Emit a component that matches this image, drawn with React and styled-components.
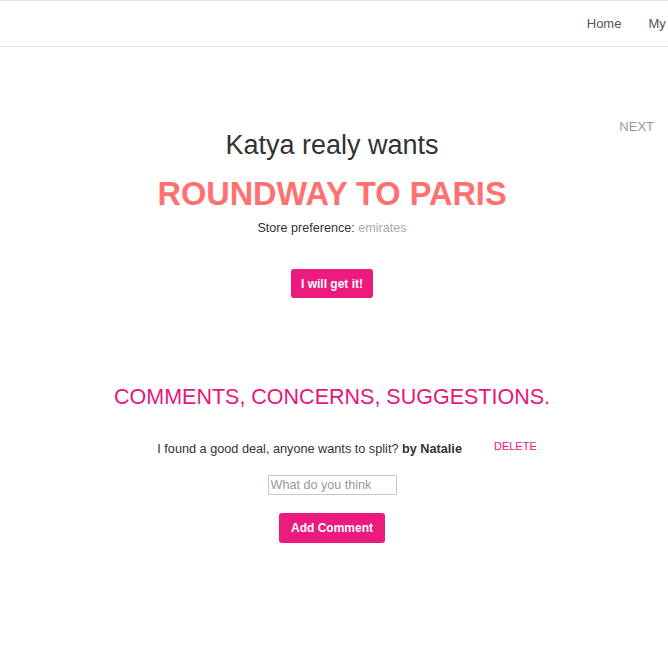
import styled, { createGlobalStyle } from "styled-components";

const GlobalStyle = createGlobalStyle`
  html, body {
    margin: 0;
    padding: 0;
    overflow: hidden;
    background: #fff;
    font-family: "Liberation Sans", Arial, Helvetica, sans-serif;
    color: #333;
  }
`;

const Page = styled.div`
  width: 668px;
`;

// HEADER
const Header = styled.header`
  height: 45px;
  border-top: 1px solid #e2e2e2;
  border-bottom: 1px solid #e2e2e2;
  display: flex;
  align-items: center;
  justify-content: flex-end;
  overflow: hidden;
`;

const Nav = styled.nav`
  display: flex;
  gap: 27px;
  margin-right: -44px;
  white-space: nowrap;
`;

const NavLink = styled.a`
  font-size: 13px;
  color: #555;
  text-decoration: none;
`;

const Main = styled.main`
  padding-right: 4px;
`;

// HERO
const Hero = styled.section`
  display: grid;
  grid-template-columns: 1fr auto 1fr;
  padding-top: 72px;
`;

const HeroText = styled.div`
  grid-column: 2;
  text-align: center;
  padding-top: 10px;
`;

const Next = styled.a`
  grid-column: 3;
  justify-self: end;
  align-self: start;
  margin-right: 10px;
  font-size: 13px;
  color: #999;
  text-decoration: none;
`;

const Wants = styled.h2`
  margin: 0;
  font-size: 27px;
  font-weight: normal;
  color: #333;
  line-height: 32px;
`;

const Item = styled.h1`
  margin: 15px 0 0;
  font-size: 32.5px;
  font-weight: bold;
  color: #ff7070;
  line-height: 36px;
`;

const Store = styled.p`
  margin: 9px 0 0;
  font-size: 12.6px;
  color: #333;
`;

const Muted = styled.span`
  color: #aaa;
`;

const Button = styled.button`
  background: #eb1a7c;
  color: #fff;
  border: none;
  border-radius: 3px;
  font-family: inherit;
  font-weight: bold;
  font-size: 12px;
  padding: 0 ${(p) => p.$pad || "10px"};
  height: ${(p) => p.$height || "29px"};
  cursor: pointer;
`;

const Center = styled.div`
  display: flex;
  justify-content: center;
  margin-top: ${(p) => p.$top || "0"};
`;

// COMMENTS
const Comments = styled.section`
  margin-top: 86px;
  text-align: center;
`;

const CommentsTitle = styled.h3`
  margin: 0;
  font-size: 21.5px;
  font-weight: normal;
  color: #e8157a;
  line-height: 26px;
`;

const CommentRow = styled.div`
  margin-top: 32px;
  display: flex;
  justify-content: center;
  align-items: baseline;
  gap: 32px;
  padding-left: 30px;
`;

const CommentText = styled.p`
  margin: 0;
  font-size: 12.7px;
  color: #333;
`;

const Delete = styled.a`
  font-size: 11px;
  color: #e8157a;
  text-decoration: none;
  position: relative;
  top: -3px;
`;

const Input = styled.input`
  width: 123px;
  height: 14px;
  padding: 2px 2px;
  border: 1px solid #c8c8c8;
  font-family: inherit;
  font-size: 12.6px;
  color: #333;
  outline: none;

  &::placeholder {
    color: #999;
  }
`;

export default function App() {
  return (
    <Page>
      <GlobalStyle />
      <Header>
        <Nav>
          <NavLink href="#">Home</NavLink>
          <NavLink href="#">My Wishes</NavLink>
        </Nav>
      </Header>

      <Main>
        <Hero>
          <HeroText>
            <Wants>Katya realy wants</Wants>
            <Item>ROUNDWAY TO PARIS</Item>
            <Store>
              Store preference: <Muted>emirates</Muted>
            </Store>
          </HeroText>
          <Next href="#">NEXT</Next>
        </Hero>

        <Center $top="34px">
          <Button>I will get it!</Button>
        </Center>

        <Comments>
          <CommentsTitle>COMMENTS, CONCERNS, SUGGESTIONS.</CommentsTitle>
          <CommentRow>
            <CommentText>
              I found a good deal, anyone wants to split? <b>by Natalie</b>
            </CommentText>
            <Delete href="#">DELETE</Delete>
          </CommentRow>
          <Center $top="19px">
            <Input placeholder="What do you think" />
          </Center>
          <Center $top="18px">
            <Button $pad="12px" $height="30px">
              Add Comment
            </Button>
          </Center>
        </Comments>
      </Main>
    </Page>
  );
}
